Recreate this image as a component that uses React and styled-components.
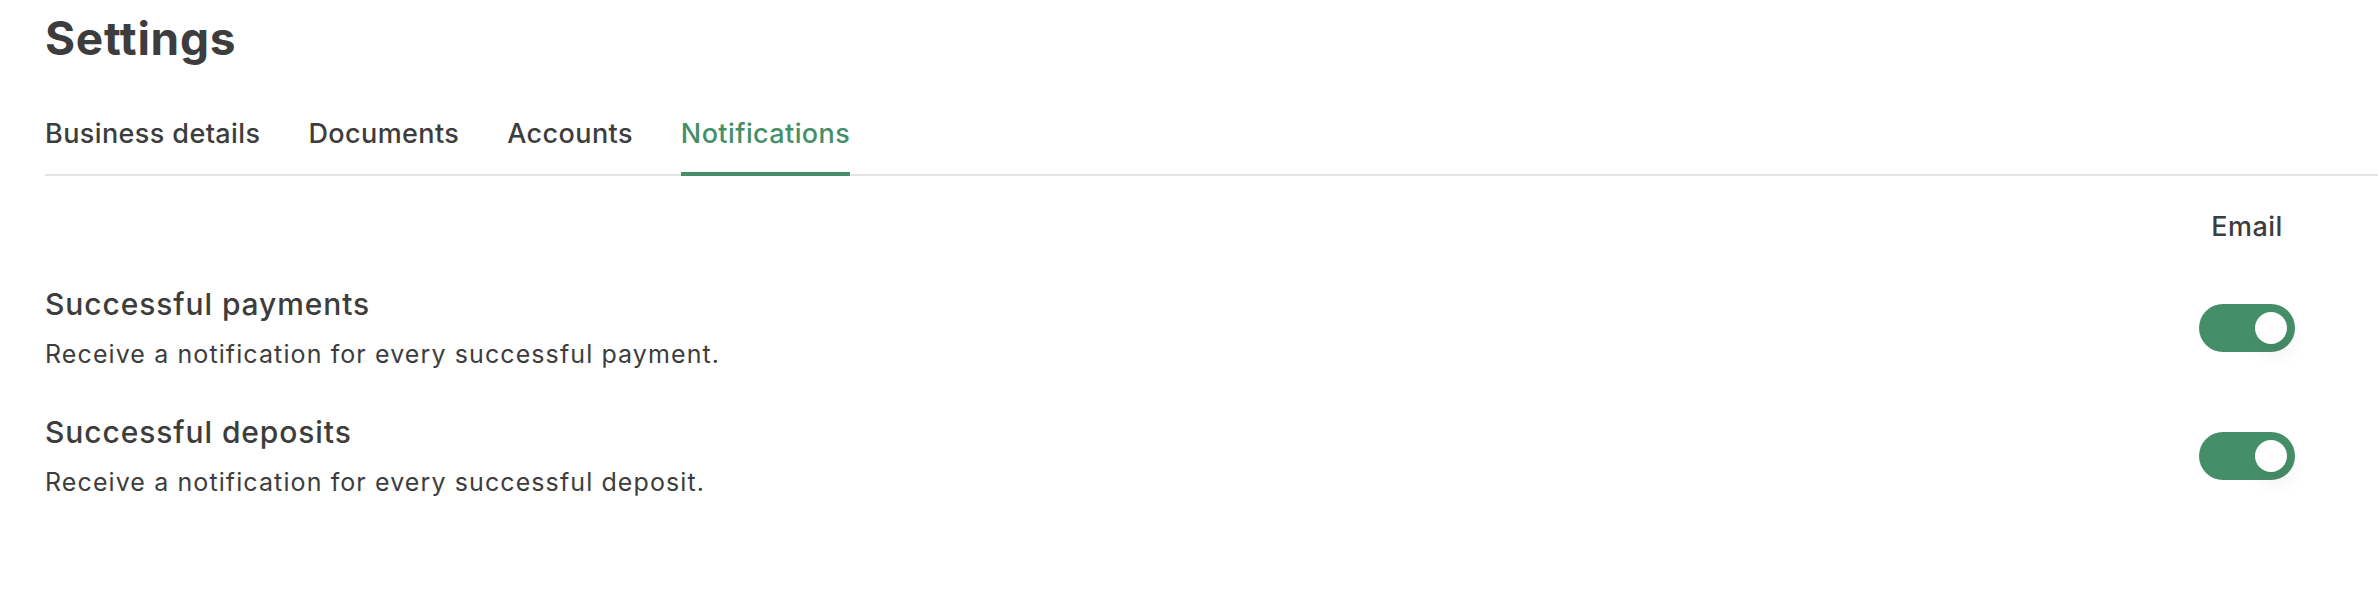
import styled, { createGlobalStyle } from "styled-components";

const GlobalStyle = createGlobalStyle`
    body {
        margin: 0;
        background: #ffffff;
        font-family: Inter, "Noto Sans", sans-serif;
        color: #3d3d3d;
    }
`;

const tabs = ["Business details", "Documents", "Accounts", "Notifications"];

const notifications = [
    {
        title: "Successful payments",
        text: "Receive a notification for every successful payment.",
    },
    {
        title: "Successful deposits",
        text: "Receive a notification for every successful deposit.",
    },
];

const App = () => {
    return (
        <S.Page>
            <GlobalStyle />
            <S.Title>Settings</S.Title>
            <S.TabBar>
                {tabs.map((tab) => (
                    <S.Tab key={tab} $active={tab === "Notifications"}>
                        {tab}
                    </S.Tab>
                ))}
            </S.TabBar>
            <S.Content>
                <S.HeaderRow>
                    <S.ColumnLabel>Email</S.ColumnLabel>
                </S.HeaderRow>
                {notifications.map((item) => (
                    <S.Row key={item.title}>
                        <S.Info>
                            <S.RowTitle>{item.title}</S.RowTitle>
                            <S.RowText>{item.text}</S.RowText>
                        </S.Info>
                        <S.ToggleCell>
                            <S.Toggle $on>
                                <S.Knob />
                            </S.Toggle>
                        </S.ToggleCell>
                    </S.Row>
                ))}
            </S.Content>
        </S.Page>
    );
};

const Page = styled.div`
    padding-left: 45px;
    padding-top: 12px;
`;

const Title = styled.h1`
    margin: 0;
    font-size: 46px;
    font-weight: 700;
    line-height: 52px;
    letter-spacing: 0.7px;
    color: #3d3d3d;
`;

const TabBar = styled.div`
    display: flex;
    gap: 48px;
    margin-top: 54px;
    border-bottom: 2px solid #e4e4e4;
`;

const Tab = styled.div`
    font-size: 27px;
    font-weight: 500;
    line-height: 32px;
    letter-spacing: 0.4px;
    padding-bottom: 22px;
    margin-bottom: -2px;
    color: ${(p) => (p.$active ? "#458f68" : "#3d3d3d")};
    border-bottom: 4px solid ${(p) => (p.$active ? "#458f68" : "transparent")};
`;

const Content = styled.div`
    display: flex;
    flex-direction: column;
    padding-right: 83px;
`;

const HeaderRow = styled.div`
    display: flex;
    justify-content: flex-end;
    padding-top: 35px;
    margin-bottom: 21px;
`;

const ColumnLabel = styled.div`
    width: 96px;
    text-align: center;
    font-size: 27px;
    font-weight: 500;
    line-height: 32px;
    letter-spacing: 0.5px;
    color: #3d3d3d;
`;

const Row = styled.div`
    display: flex;
    align-items: center;
    justify-content: space-between;
    height: 128px;
`;

const Info = styled.div`
    display: flex;
    flex-direction: column;
    gap: 18px;
`;

const RowTitle = styled.div`
    font-size: 30px;
    font-weight: 500;
    line-height: 34px;
    letter-spacing: 0.9px;
    color: #3d3d3d;
`;

const RowText = styled.div`
    font-size: 25px;
    line-height: 30px;
    letter-spacing: 1.1px;
    color: #3d3d3d;
`;

const ToggleCell = styled.div`
    width: 96px;
    display: flex;
    justify-content: center;
`;

const Toggle = styled.div`
    width: 96px;
    height: 48px;
    border-radius: 24px;
    background: ${(p) => (p.$on ? "#458f68" : "#d6d6d6")};
    display: flex;
    align-items: center;
    justify-content: ${(p) => (p.$on ? "flex-end" : "flex-start")};
    padding: 0 8px;
    box-sizing: border-box;
`;

const Knob = styled.div`
    width: 32px;
    height: 32px;
    border-radius: 50%;
    background: #ffffff;
    box-shadow: 6px 12px 18px rgba(0, 0, 0, 0.06);
`;

const S = {
    Page,
    Title,
    TabBar,
    Tab,
    Content,
    HeaderRow,
    ColumnLabel,
    Row,
    Info,
    RowTitle,
    RowText,
    ToggleCell,
    Toggle,
    Knob,
};

export default App;
